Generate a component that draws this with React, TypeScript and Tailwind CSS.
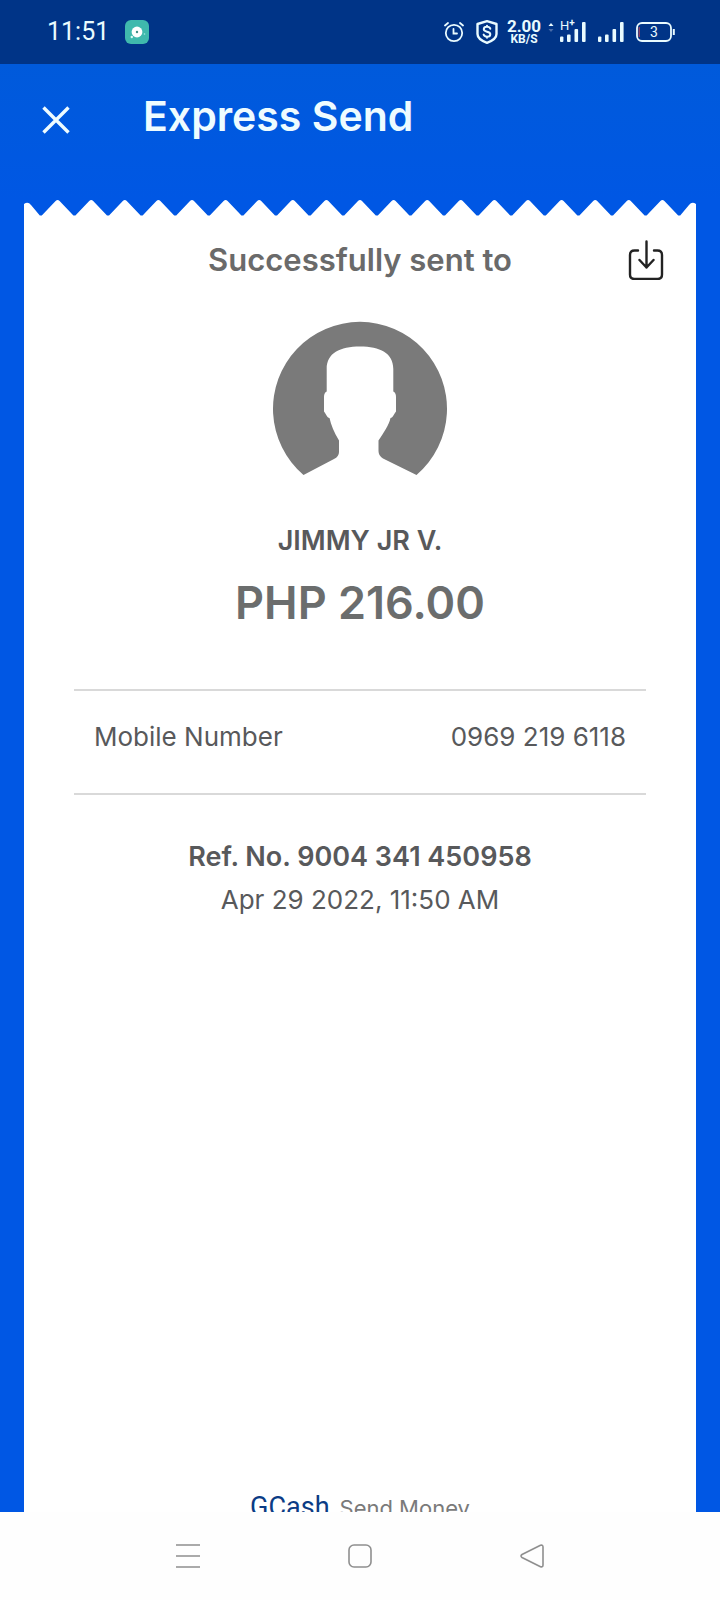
const details = [{ label: 'Mobile Number', value: '0969 219 6118' }];

const TEETH = 20;
const TOOTH_WIDTH = 672 / TEETH;

function zigzagPath() {
  let d = 'M0 17 V4 Q4 1 7 5';
  for (let i = 0; i < TEETH; i++) {
    const x = i * TOOTH_WIDTH;
    d += ` L${x + TOOTH_WIDTH / 2 - 1} 15.5 h2`;
    if (i < TEETH - 1) {
      const peak = x + TOOTH_WIDTH;
      d += ` L${peak - 2} 1 Q${peak} -1 ${peak + 2} 1`;
    }
  }
  return d + ' L665 5 Q668 1 672 4 V17 Z';
}

function AlarmIcon() {
  return (
    <svg viewBox="0 0 20 22" className="h-[22px] w-5" fill="none" stroke="currentColor" strokeWidth="1.8" strokeLinecap="round">
      <circle cx="10" cy="12" r="8.2" />
      <path d="M9.5 8v4.5H13M1 4.5 4 2M19 4.5 16 2" />
    </svg>
  );
}

function ShieldIcon() {
  return (
    <svg viewBox="0 0 22 24" className="h-6 w-[22px]" fill="none" stroke="currentColor" strokeWidth="2.4" strokeLinejoin="round" strokeLinecap="round">
      <path d="M11 1.2 20.5 4v10c0 4-4.5 7-9.5 8.8C6 21 1.5 18 1.5 14V4Z" />
      <path d="M14.3 8.7c-.4-1.3-1.7-1.9-3.3-1.9-1.9 0-3.2.9-3.2 2.4 0 3.4 6.5 1.5 6.5 5 0 1.6-1.4 2.5-3.3 2.5-1.7 0-3-.7-3.4-2.1M11 5.8v1M11 16.700v1" strokeWidth="2" />
    </svg>
  );
}

function SignalIcon() {
  return (
    <svg viewBox="0 0 26 20" className="h-5 w-[26px]" fill="currentColor">
      <rect x="0" y="14.5" width="3.4" height="5.5" rx="1" />
      <rect x="7" y="12.5" width="3.6" height="7.5" rx="1" />
      <rect x="14.5" y="7" width="3.6" height="13" rx="1" />
      <rect x="22" y="0" width="3.6" height="20" rx="1" />
    </svg>
  );
}

function StatusBar() {
  return (
    <div className="flex h-16 shrink-0 items-center justify-between bg-[#003487] pr-[45px] pl-[47px] text-[#e9fbff]">
      <div className="flex items-center gap-4">
        <span className="font-['Roboto',sans-serif] text-[25px] leading-8">11:51</span>
        <svg viewBox="0 0 24 24" className="h-6 w-6">
          <rect width="24" height="24" rx="6" fill="#3fb9ad" />
          <circle cx="12" cy="12" r="5.4" fill="#fff" />
          <circle cx="12" cy="12" r="1.2" fill="#3f8f88" />
          <circle cx="6.8" cy="17" r="1.2" fill="#d8fbf5" />
          <circle cx="19.5" cy="14" r=".8" fill="#a5ece2" />
        </svg>
      </div>

      <div className="flex items-center">
        <AlarmIcon />
        <div className="w-3" />
        <ShieldIcon />
        <div className="ml-2 flex w-9 flex-col items-center font-['Roboto',sans-serif]">
          <span className="text-[17px] leading-[13px] font-bold">2.00</span>
          <span className="text-[12px] leading-3 font-bold">KB/S</span>
        </div>
        <svg viewBox="0 0 6 20" className="mx-1.5 h-5 w-1.5" fill="none">
          <path d="M.5 4 3 1l2.500 3Z" fill="currentColor" />
          <path d="M.5 7 3 10l2.500-3Z" fill="#4a6ca8" />
        </svg>
        <div className="relative">
          <SignalIcon />
          <span className="absolute -top-1 left-0 font-['Roboto',sans-serif] text-[13px] leading-4">
            H<sup className="-top-1 text-[10px] font-bold">+</sup>
          </span>
        </div>
        <div className="w-3" />
        <SignalIcon />
        <div className="w-3" />
        <svg viewBox="0 0 39 20" className="h-5 w-[39px]" fill="none" stroke="currentColor" strokeWidth="1.8">
          <rect x="1" y="1" width="34" height="18" rx="5" />
          <path d="M37.8 7v6" strokeWidth="2" />
          <path d="M3.2 5v10" stroke="#b2465f" strokeWidth="1.2" />
          <text x="18" y="15" textAnchor="middle" fill="currentColor" stroke="none" fontSize="14" fontFamily="Roboto, sans-serif">3</text>
        </svg>
      </div>
    </div>
  );
}

function Avatar() {
  return (
    <svg viewBox="0 0 174 154" className="h-[154px] w-[174px]" fill="#7a7a7a" role="img" aria-label="Recipient">
      <path d="M30.5 154A87 87 0 1 1 143.500 154L110 137.500Q105.500 135 105.500 130V119.500C111 111 116 104 117.500 97C120 96.500 121 93 123 90.500V76Q123 71.500 120.300 70.500V48C120.300 32 107 25.500 87 25.500S53.700 32 53.700 48V70.500Q51 71.500 51 76V90.500C53 93 54 96.500 56.500 97C58 104 61 111 66 119.500V131Q66 135.500 61 138Z" />
    </svg>
  );
}

export default function App() {
  return (
    <div className="flex h-screen flex-col overflow-hidden bg-[#0057e4] font-['Inter',sans-serif]">
      <StatusBar />

      <header className="flex h-[136px] shrink-0 items-start bg-linear-to-b from-[#005adb] to-[#0057e4] px-[42px] pt-7">
        <button type="button" aria-label="Close" className="mt-[14px] text-[#eefcff]">
          <svg viewBox="0 0 28 28" className="h-7 w-7" fill="none" stroke="currentColor" strokeWidth="3.4">
            <path d="M1.500 1.500 26.500 26.500M26.500 1.500 1.500 26.500" />
          </svg>
        </button>
        <h1 className="ml-[73px] text-[41px] leading-[48px] font-semibold text-[#eefcff]">Express Send</h1>
      </header>

      <main className="flex min-h-0 flex-1 flex-col px-6">
        <svg viewBox="0 0 672 16" preserveAspectRatio="none" className="h-4 w-full shrink-0" fill="#fff">
          <path d={zigzagPath()} />
        </svg>

        <div className="flex min-h-0 flex-1 flex-col items-center overflow-hidden bg-white text-[#58595b]">
          <div className="grid w-full grid-cols-[1fr_auto_1fr] items-center px-8 pt-6">
            <h2 className="col-start-2 text-[31px] leading-10 font-semibold text-[#6a6a6a]">Successfully sent to</h2>
            <button type="button" aria-label="Save receipt" className="justify-self-end text-[#222]">
              <svg viewBox="0 0 36 40" className="h-10 w-9" fill="none" stroke="currentColor" strokeWidth="2.400" strokeLinecap="round" strokeLinejoin="round">
                <path d="M10 10.500H6.500Q2 10.500 2 15v19.500Q2 39 6.500 39h23q4.500 0 4.500-4.500V15q0-4.500-4.500-4.500H26" />
                <path d="M18.500 1.500v26M11.500 20l7 7.500 7-7.500" />
              </svg>
            </button>
          </div>

          <div className="mt-[41px]">
            <Avatar />
          </div>

          <p className="mt-[46px] text-[27px] leading-10 font-semibold">JIMMY JR V.</p>
          <p className="mt-2.5 text-[45px] leading-[64px] font-semibold text-[#6b6d6d]">PHP 216.00</p>

          <dl className="mt-[54px] w-full px-[50px]">
            {details.map(item => (
              <div key={item.label} className="flex h-[106px] justify-between border-y-2 border-[#d9d9d9] px-5 pt-[26px] text-[26px] leading-10">
                <dt>{item.label}</dt>
                <dd>{item.value}</dd>
              </div>
            ))}
          </dl>

          <p className="mt-[42px] text-[27px] leading-10 font-semibold">Ref. No. 9004 341 450958</p>
          <p className="mt-[3px] text-[26px] leading-10">Apr 29 2022, 11:50 AM</p>

          <footer className="mt-auto -mb-3 flex shrink-0 items-baseline gap-2.5 leading-8 text-[#7a7a7a]">
            <span className="font-['Roboto',sans-serif] text-[27px] text-[#0b3c85]">GCash</span>
            <span className="text-[22px]">Send Money</span>
          </footer>
        </div>
      </main>

      <nav className="flex h-[88px] shrink-0 items-center justify-center gap-[148px] bg-[#fefefe] text-[#8f8f8f]">
        <button type="button" aria-label="Recent apps">
          <svg viewBox="0 0 24 24" className="h-6 w-6" fill="none" stroke="currentColor" strokeWidth="1.600">
            <path d="M0 1h24M0 12h24M0 23h24" />
          </svg>
        </button>
        <button type="button" aria-label="Home">
          <svg viewBox="0 0 24 24" className="h-6 w-6" fill="none" stroke="currentColor" strokeWidth="1.600">
            <rect x="1" y="1" width="22" height="22" rx="5" />
          </svg>
        </button>
        <button type="button" aria-label="Back">
          <svg viewBox="0 0 24 24" className="h-6 w-6" fill="none" stroke="currentColor" strokeWidth="1.600" strokeLinejoin="round">
            <path d="M20.500 1.300Q23 .5 23 3v18q0 2.500-2.500 1.700L2 13.500q-2-1.500 0-3Z" />
          </svg>
        </button>
      </nav>
    </div>
  );
}
